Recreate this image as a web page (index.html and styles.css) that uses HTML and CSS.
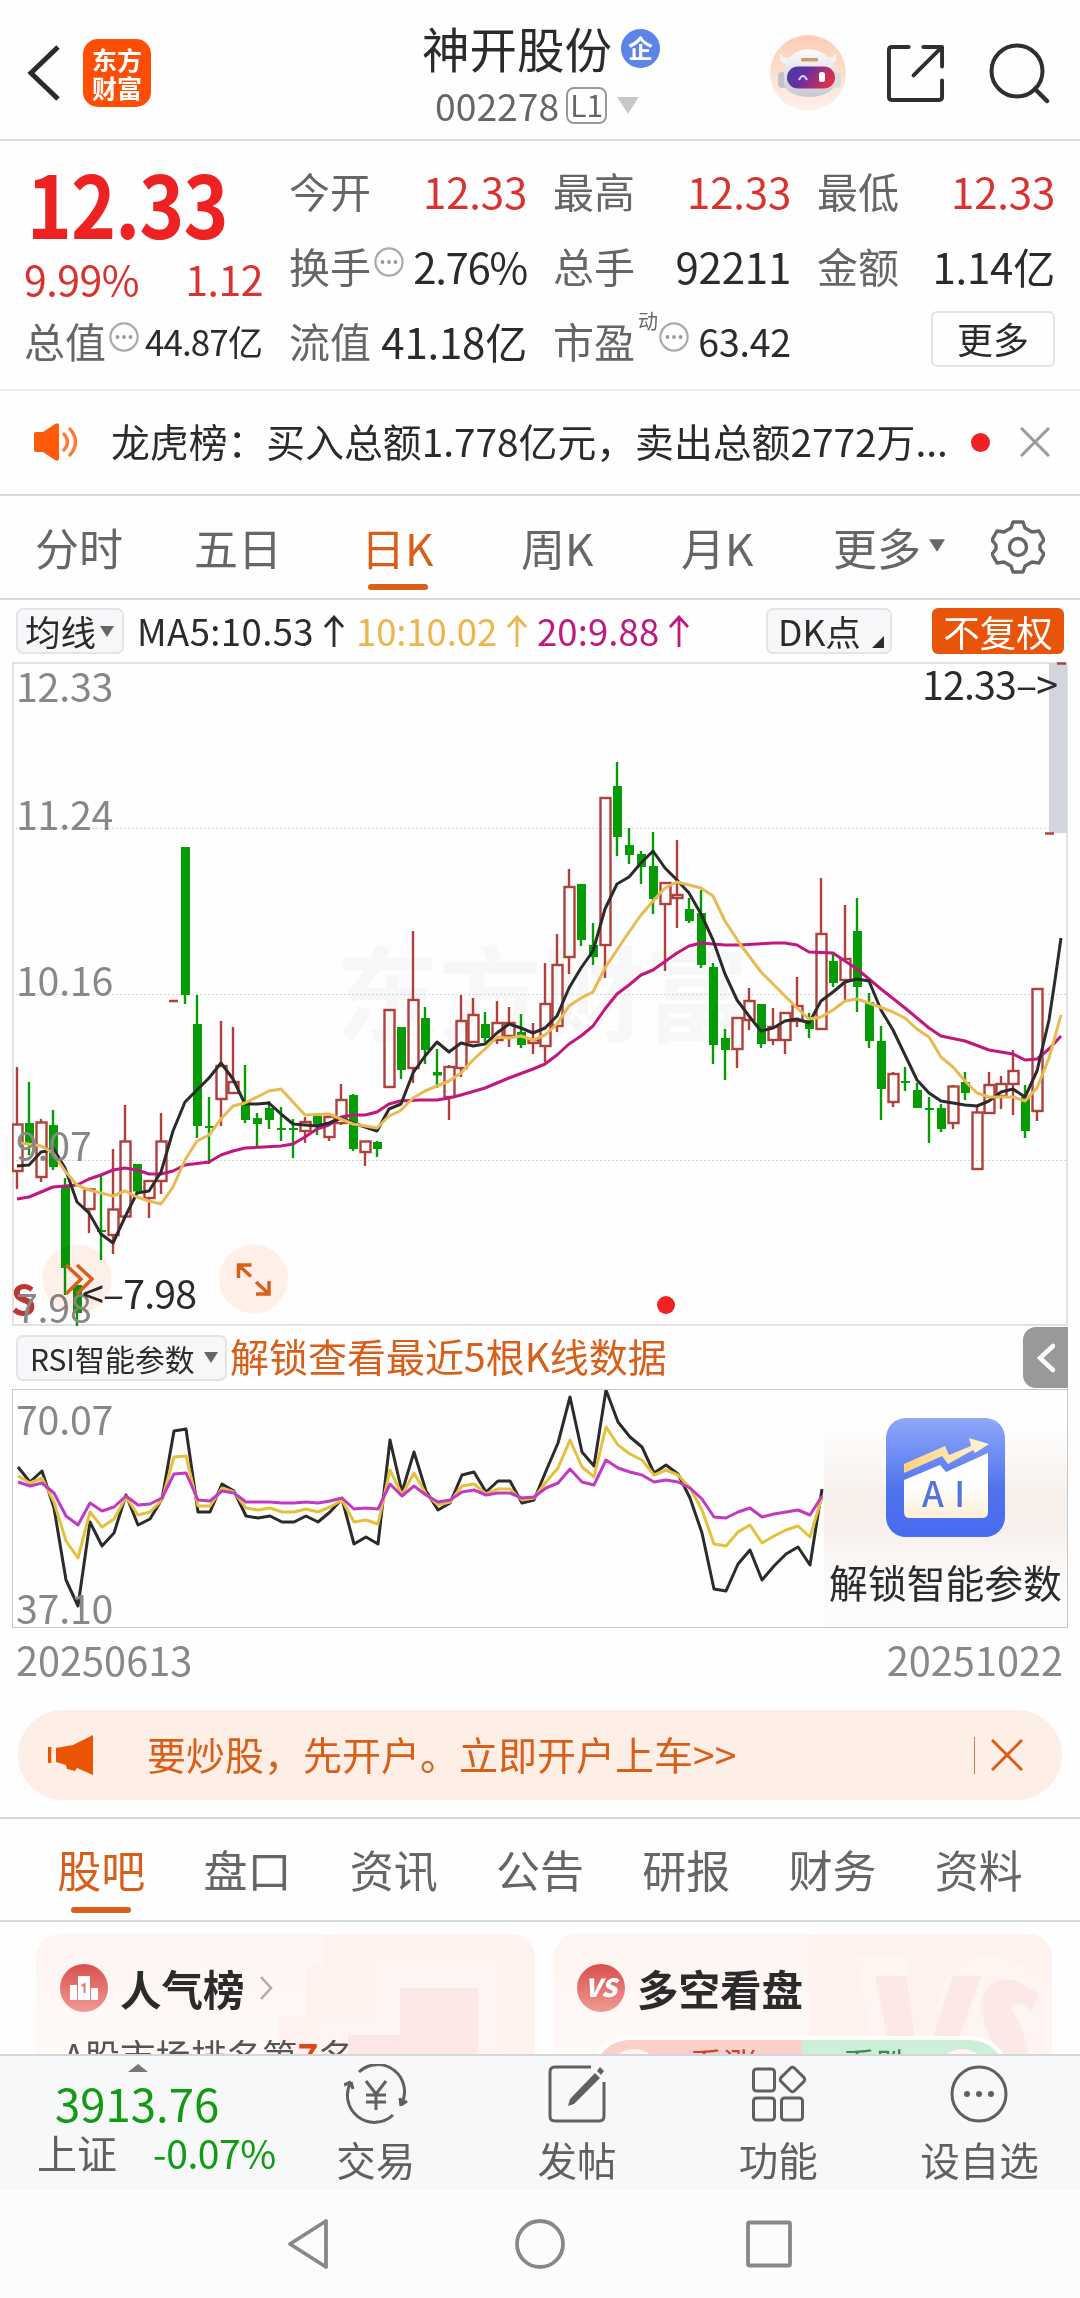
FILE: index.html
```html
<!DOCTYPE html>
<html lang="zh-CN">
<head>
<meta charset="utf-8">
<title>神开股份 002278</title>
<link rel="stylesheet" href="styles.css">
</head>
<body>
<svg class="defs" width="0" height="0">
  <symbol id="more-info" viewBox="0 0 30 30"><circle cx="15" cy="15" r="13.6" fill="none" stroke="#aaa" stroke-width="2.2"/><circle cx="8.5" cy="15" r="1.9" fill="#999"/><circle cx="15" cy="15" r="1.9" fill="#999"/><circle cx="21.5" cy="15" r="1.9" fill="#999"/></symbol>
  <symbol id="arrow-up" viewBox="0 0 22 32"><path d="M11 32V3M2 12l9-10 9 10" fill="none" stroke="currentColor" stroke-width="2.8"/></symbol>
  <symbol id="caret" viewBox="0 0 14 11"><path d="M0 0h14l-7 11z" fill="currentColor"/></symbol>
</svg>

<header class="header">
  <svg class="back" viewBox="0 0 34 58"><path d="M31 3L4 29l27 26" fill="none" stroke="#2b2b2b" stroke-width="5"/></svg>
  <div class="logo"><span>东方</span><span>财富</span></div>
  <div class="title">
    <div class="name">神开股份<span class="badge">企</span></div>
    <div class="code">002278<span class="level">L1</span><svg class="code-caret"><use href="#caret"/></svg></div>
  </div>
  <svg class="robot" viewBox="0 0 76 76">
    <defs>
      <linearGradient id="rb" x2="0" y2="1"><stop stop-color="#fbcdb4"/><stop offset="1" stop-color="#fff1ea"/></linearGradient>
      <linearGradient id="rf" x2="1" y2="0.3"><stop stop-color="#3f3fa8"/><stop offset=".45" stop-color="#6a2fa0"/><stop offset="1" stop-color="#d8304f"/></linearGradient>
      <linearGradient id="rw" x2="0" y2="1"><stop stop-color="#fdfbfb"/><stop offset="1" stop-color="#c6c8d2"/></linearGradient>
    </defs>
    <circle cx="38" cy="38" r="38" fill="url(#rb)"/>
    <path d="M19 29q-11 0-9-11 4 6 12 4zM59 29q9 0 7-11-4 6-11 4z" fill="#f6f1f0"/>
    <rect x="8" y="37" width="9" height="16" rx="4" fill="#c2c3cc"/><rect x="62" y="37" width="9" height="16" rx="4" fill="#dcdce2"/>
    <path d="M14 46V38C16 7 60 6 65 38v10c-2 18-49 19-51 0z" fill="url(#rw)"/>
    <rect x="31" y="23" width="17" height="3.500" rx="1" fill="#d39a6a"/>
    <rect x="17" y="31.500" width="48" height="22" rx="11" fill="url(#rf)"/>
    <path d="M29 45q4-8 8 0" fill="none" stroke="#d9d4ff" stroke-width="2"/><rect x="49" y="37" width="6" height="10" rx="2.500" fill="#fff"/>
  </svg>
  <svg class="share" viewBox="0 0 60 60"><path d="M23 3H6Q3 3 3 6v48q0 3 3 3h48q3 0 3-3V37M38 3h19v20M55 5L28 32" fill="none" stroke="#2f2f2f" stroke-width="4" stroke-linecap="round" stroke-linejoin="round"/></svg>
  <svg class="search" viewBox="0 0 62 62"><circle cx="29" cy="29" r="25.500" fill="none" stroke="#2f2f2f" stroke-width="4"/><path d="M47 47l12 12" stroke="#2f2f2f" stroke-width="4.5" stroke-linecap="round"/></svg>
</header>

<section class="quote">
  <div class="main-quote">
    <div class="price">12.33</div>
    <div class="change"><span>9.99%</span><span>1.12</span></div>
    <div class="cell"><span class="k">总值<svg><use href="#more-info"/></svg></span><span class="v small">44.87亿</span></div>
  </div>
  <div class="cells">
    <div class="cell"><span class="k">今开</span><span class="v up">12.33</span></div>
    <div class="cell"><span class="k">最高</span><span class="v up">12.33</span></div>
    <div class="cell"><span class="k">最低</span><span class="v up">12.33</span></div>
    <div class="cell"><span class="k">换手<svg><use href="#more-info"/></svg></span><span class="v turnover">2.76%</span></div>
    <div class="cell"><span class="k">总手</span><span class="v">92211</span></div>
    <div class="cell"><span class="k">金额</span><span class="v">1.14亿</span></div>
    <div class="cell"><span class="k">流值</span><span class="v">41.18亿</span></div>
    <div class="cell"><span class="k">市盈<sup>动</sup><svg><use href="#more-info"/></svg></span><span class="v mid">63.42</span></div>
    <div class="cell end"><button class="more">更多</button></div>
  </div>
</section>

<section class="news">
  <svg class="speaker" viewBox="0 0 46 38"><path d="M2 9h7L21 1q3-2 4 1v34q-1 3-4 1L9 29H2q-2 0-2-2V11q0-2 2-2z" fill="#ff5a0a"/><path d="M30 11q7 8 0 16M36 6q11 13 0 26" fill="none" stroke="#ff7a3a" stroke-width="3.4" stroke-linecap="round"/></svg>
  <p>龙虎榜：买入总额1.778亿元，卖出总额2772万...</p>
  <i class="dot"></i>
  <svg class="close" viewBox="0 0 30 30"><path d="M1 1l28 28M29 1L1 29" stroke="#999" stroke-width="3"/></svg>
</section>

<nav class="periods">
  <span class="p1">分时</span><span class="p2">五日</span><span class="p3 on">日K</span><span class="p4">周K</span><span class="p5">月K</span><span class="p6">更多<svg><use href="#caret"/></svg></span>
  <svg class="gear" viewBox="-27 -27 54 54"><path d="M-5-25H5l2 6 7 4 7-1 5 9-4 5v4l4 5-5 9-7-1-7 4-2 6H-5l-2-6-7-4-7 1-5-9 4-5v-4l-4-5 5-9 7 1 7-4z" fill="none" stroke="#666" stroke-width="3.4" stroke-linejoin="round"/><circle r="8.5" fill="none" stroke="#666" stroke-width="3.4"/></svg>
</nav>

<div class="ma-row">
  <button class="chip ma">均线<svg><use href="#caret"/></svg></button>
  <span class="m m5">MA5:10.53<svg><use href="#arrow-up"/></svg></span>
  <span class="m m10">10:10.02<svg><use href="#arrow-up"/></svg></span>
  <span class="m m20">20:9.88<svg><use href="#arrow-up"/></svg></span>
  <button class="chip dk">DK点<i></i></button>
  <button class="adjust">不复权</button>
</div>

<svg class="kline" viewBox="12 662 1056 664">
  <text class="watermark" x="335" y="1034" textLength="414">东方财富</text>
  <path d="M12 828.5h1056M12 994.5h1056M12 1160.5h1056" stroke="#d6d6d6" stroke-dasharray="2 2"/>
  <rect x="13" y="663" width="1054" height="662" fill="none" stroke="#e2e2e2" stroke-width="2"/>
  <rect x="1049" y="663" width="18" height="170" fill="#d2d6dc"/>
  <g id="candles"></g>
  <g id="averages" fill="none" stroke-width="3" stroke-linejoin="round"></g>
  <text class="signal" x="11" y="1315">S</text>
  <g class="axis"><text x="16" y="702">12.33</text><text x="16" y="830">11.24</text><text x="16" y="996">10.16</text><text x="16" y="1161">9.07</text><text x="16" y="1323">7.98</text></g>
  <g class="mark"><text x="922" y="700" textLength="136">12.33–&gt;</text><text x="82" y="1309" textLength="115">&lt;–7.98</text></g>
  <g class="tint"><circle cx="77" cy="1279" r="34.5"/><circle cx="253.500" cy="1279" r="34.5"/></g>
  <g fill="none" stroke="#d9601a" stroke-width="3.5"><path d="M66 1265l15 14-15 15M77 1265l15 14-15 15"/><path d="M238.500 1278v-13h13M239 1265.500l12 11M269 1281v13h-13M268 1293l-12-11"/></g>
  <circle cx="666" cy="1305" r="9" fill="#ee2222"/>
</svg>

<div class="rsi-row">
  <button class="chip rsi">RSI智能参数<svg><use href="#caret"/></svg></button>
  <span class="unlock">解锁查看最近5根K线数据</span>
  <button class="fold"><svg viewBox="0 0 18 30"><path d="M16 3L3 15l13 12" fill="none" stroke="#fff" stroke-width="4.5" stroke-linecap="round"/></svg></button>
</div>

<div class="rsi-box">
  <svg class="rsi-chart" viewBox="13 1390 811 237">
    <g id="rsi" fill="none" stroke-width="3" stroke-linejoin="round"></g>
    <g class="axis"><text x="16" y="1435">70.07</text><text x="16" y="1624">37.10</text></g>
  </svg>
  <div class="ai-panel">
    <svg viewBox="0 0 119 123">
      <defs><linearGradient id="aib" x2="0" y2="1"><stop stop-color="#8fa8fb"/><stop offset=".6" stop-color="#4f73ec"/><stop offset="1" stop-color="#4a6af0"/></linearGradient>
      <linearGradient id="aiw" x2="0" y2="1"><stop offset=".5" stop-color="#fff"/><stop offset="1" stop-color="#fdeed8"/></linearGradient>
      <linearGradient id="aig" x2="1" y2="0"><stop stop-color="#ffd27c"/><stop offset="1" stop-color="#fff3d9"/></linearGradient></defs>
      <rect width="119" height="119" rx="20" fill="url(#aib)"/>
      <path d="M18 62l36-15 6 7 42-19v59q0 6-6 6H24q-6 0-6-6z" fill="url(#aiw)"/>
      <path d="M18 46l41-18 4 9 22-9-2-8 20 6-14 9-2-3-25 14-6-8-38 17z" fill="url(#aig)"/>
      <text class="ai-text" x="36" y="89" textLength="43">AI</text>
    </svg>
    <span>解锁智能参数</span>
  </div>
</div>
<div class="dates"><span>20250613</span><span>20251022</span></div>

<div class="banner">
  <svg class="horn" viewBox="0 0 46 40"><path d="M1.500 12v16" stroke="#ea5504" stroke-width="3.5"/><path d="M8 13L25 10 45 0v40l-16-7-2 3-8-2-1-4-10-3z" fill="#ea5504"/></svg>
  <span>要炒股，先开户。立即开户上车&gt;&gt;</span>
  <i></i>
  <svg class="bclose" viewBox="0 0 32 32"><path d="M1 1l30 30M31 1L1 31" stroke="#dd5d18" stroke-width="3"/></svg>
</div>

<nav class="sections"><span class="on">股吧</span><span>盘口</span><span>资讯</span><span>公告</span><span>研报</span><span>财务</span><span>资料</span></nav>

<section class="cards">
  <article class="card">
    <svg class="deco" viewBox="0 0 499 121"><path d="M289 0h210v121H243V82h27V32h19z" fill="#fef1ee"/><path d="M340 25h122v96H282V84h58z" fill="#fef5f2"/><path d="M364 54h78v67h-130v-20h52z" fill="#fce7e4"/></svg>
    <h3><svg viewBox="0 0 48 48"><defs><linearGradient id="ci" x2="0" y2="1"><stop stop-color="#d94f4c"/><stop offset="1" stop-color="#ef9b94"/></linearGradient></defs><circle cx="24" cy="24" r="24" fill="url(#ci)"/><path d="M10 21h7v15h-7zM18 12h12v24H18zM31 24h7v12h-7z" fill="#fff"/><path d="M21.500 22l3-2v9" fill="none" stroke="#e07872" stroke-width="2"/></svg>人气榜<svg class="chev" viewBox="0 0 14 24"><path d="M2 1l10 11L2 23" fill="none" stroke="#aaa" stroke-width="2.5"/></svg></h3>
    <p>A股市场排名第<b>7</b>名</p>
  </article>
  <article class="card">
    <svg class="deco" viewBox="0 0 499 121"><path d="M256 0h243v121H256z" fill="#fef1ee"/><path d="M302 22h50l14 99h-44zM390 50q20-40 75-22l34 22v71H372z" fill="#fef5f2"/><path d="M322 42h32l10 79h-26zM400 42h28l-28 79h-26zM486 60q-48-34-58 10 2 24 18 51h30q-6-30-18-46 8-14 20 4z" fill="#fce9e6"/></svg>
    <h3><svg viewBox="0 0 48 48"><circle cx="24" cy="24" r="24" fill="url(#ci)"/><text class="vs" x="8" y="33" textLength="32">VS</text></svg>多空看盘</h3>
    <div class="vote"><span class="rise"><i></i>看涨</span><span class="fall">看跌<i></i></span></div>
  </article>
</section>

<footer class="bottom">
  <div class="index"><svg class="up-caret" viewBox="0 0 20 8"><path d="M0 8L10 0l10 8z" fill="#777"/></svg><strong>3913.76</strong><div><span>上证</span><em>-0.07%</em></div></div>
  <div class="act"><svg viewBox="0 0 64 60"><g fill="none" stroke="#5f6062" stroke-width="3"><path d="M15 8A27 27 0 0 1 57 41M49 51A27 27 0 0 1 7 18M57 41l6-4M57 42l-1-8M7 18l-7 3M7 18l2 7"/><path d="M22 17l10 13 10-13M32 30v16M22 31h20M22 38h20"/></g></svg><span>交易</span></div>
  <div class="act"><svg viewBox="0 0 64 60"><g fill="none" stroke="#5f6062" stroke-width="3"><path d="M46 3H10Q5 3 5 8v44q0 5 5 5h44q5 0 5-5V18"/></g><path d="M50 9l5 5-26 26-6 2 2-7zM52 7l3-4 4 4-3 4z" fill="#5f6062"/></svg><span>发帖</span></div>
  <div class="act"><svg viewBox="0 0 64 60"><g fill="none" stroke="#5f6062" stroke-width="3"><rect x="7.500" y="5" width="21" height="22" rx="3"/><rect x="7.500" y="34" width="21" height="22" rx="3"/><rect x="35.500" y="34" width="21" height="22" rx="3"/><rect x="37" y="6" width="19" height="19" rx="3" transform="rotate(45 46.500 15.500)"/></g></svg><span>功能</span></div>
  <div class="act"><svg viewBox="0 0 64 60"><circle cx="32" cy="30" r="27" fill="none" stroke="#5f6062" stroke-width="3"/><g fill="#5f6062"><circle cx="20" cy="30" r="3"/><circle cx="32" cy="30" r="3"/><circle cx="44" cy="30" r="3"/></g></svg><span>设自选</span></div>
</footer>
<div class="sysnav">
  <svg viewBox="0 0 44 54"><path d="M40 4v46L4 27z"/></svg>
  <svg viewBox="0 0 54 54"><circle cx="27" cy="27" r="23"/></svg>
  <svg viewBox="0 0 46 54"><rect x="2" y="5.500" width="42" height="43" rx="1.500"/></svg>
</div>
<script src="chart.js"></script>
</body>
</html>
```
FILE: styles.css
```css
* { box-sizing: border-box; }
body { margin: 0; width: 1080px; height: 2298px; overflow: hidden; background: #fefefe; color: #2b2b2b; font-family: "Noto Sans CJK SC", sans-serif; }
button { font: inherit; color: inherit; margin: 0; padding: 0; border: 0; background: none; }
h3, p { margin: 0; }
svg { display: block; flex: none; }
.defs { position: absolute; }

.header { display: flex; align-items: center; height: 141px; padding-top: 7px; border-bottom: 2px solid #dcdcdc; }
.back { width: 34px; height: 58px; margin-left: 27px; }
.logo { display: flex; flex-direction: column; align-items: center; justify-content: center; width: 68px; height: 68px; margin-left: 22px; border-radius: 15px; background: #ff4d05; color: #fff; font-size: 25px; font-weight: 700; line-height: 28px; }
.title { width: 250px; margin-left: 271px; height: 136px; padding-top: 10px; }
.name { display: flex; align-items: center; height: 66px; font-size: 47.500px; line-height: 66px; white-space: nowrap; }
.badge { width: 39px; height: 39px; margin: 0 0 0 9px; border-radius: 50%; background: #5b84e6; color: #fff; font-size: 25px; font-weight: 700; line-height: 36px; text-align: center; }
.code { display: flex; align-items: center; height: 48px; padding-left: 13px; color: #666; font-size: 37.300px; line-height: 48px; }
.level { width: 41px; height: 37px; margin-left: 7px; border: 2px solid #999; border-radius: 8px; font-size: 30px; line-height: 31px; text-align: center; }
.code-caret { width: 22px; height: 17px; margin-left: 10px; color: #c8c8c8; }
.robot { width: 76px; height: 76px; margin-left: 98px; }
.share { width: 59px; height: 59px; margin-left: 40px; }
.search { width: 62px; height: 62px; margin-left: 43px; }

.quote { display: flex; gap: 26px; height: 250px; padding: 12px 24px 0 25px; border-bottom: 2px solid #ececec; }
.main-quote { width: 238px; margin-left: -1px; margin-right: 1px; }
.price { width: 234px; height: 102px; color: #ee2222; font-size: 86px; font-weight: 700; line-height: 97px; letter-spacing: -1px; transform: scaleX(.89); transform-origin: 0 0; padding-left: 3px; }
.change { display: flex; justify-content: space-between; height: 50px; color: #d93330; font-size: 41px; line-height: 46px; }
.change span { letter-spacing: -.5px; }
.change span:last-child { margin-right: -1px; }
.main-quote .cell { margin-top: -2px; }
.cells { display: grid; grid-template-columns: repeat(3, 238px); grid-auto-rows: 75px; column-gap: 26px; }
.cell { display: flex; align-items: center; justify-content: space-between; height: 75px; white-space: nowrap; font-size: 42px; line-height: 75px; }
.k { display: flex; align-items: center; color: #666; font-size: 41px; }
.k svg { width: 30px; height: 30px; margin: -7px 0 0 3px; }
.k sup { align-self: flex-start; margin: 3px 0 0 3px; font-size: 20px; line-height: 30px; }
.k sup + svg { margin-left: 1px; }
.v { letter-spacing: -.2px; }
.turnover { letter-spacing: -1.300px; }
.mid { font-size: 37.500px; }
.small { font-size: 35px; letter-spacing: -.9px; }
.up { color: #d93330; }
.end { justify-content: flex-end; }
.more { width: 124px; height: 56px; margin-top: -4px; border: 2px solid #e2e4e6; border-radius: 6px; font-size: 36px; line-height: 47px; }

.news { display: flex; align-items: center; height: 105px; border-bottom: 2px solid #d8d8d8; }
.speaker { width: 46px; height: 38px; margin-left: 34px; margin-top: -2px; }
.news p { width: 846px; margin-left: 31px; font-size: 38.850px; line-height: 60px; white-space: nowrap; margin-top: -5px; }
.dot { width: 19px; height: 19px; margin-left: 14px; border-radius: 50%; background: #ee2222; }
.close { width: 30px; height: 30px; margin: -2px 0 0 30px; }

.periods { display: flex; align-items: center; height: 104px; padding-left: 35px; border-bottom: 2px solid #d8d8d8; color: #666; font-size: 44px; line-height: 100px; white-space: nowrap; }
.periods span { display: flex; align-items: center; justify-content: flex-start; height: 102px; position: relative; }
.p1 { width: 159px; } .p2 { width: 167px; } .p3 { width: 160px; } .p4 { width: 160px; } .p5 { width: 152px; } .p6 { width: 158px; }
.p6 svg { width: 16px; height: 13px; margin: -4px 0 0 8px; }
.on { color: #d95f18 !important; }
.p3::after { content: ""; position: absolute; left: 7px; bottom: 8px; width: 60px; height: 6px; border-radius: 3px; background: #d95f18; }
.gear { width: 54px; height: 54px; }

.ma-row { display: flex; align-items: center; height: 62px; padding-left: 16px; font-size: 36.500px; line-height: 60px; white-space: nowrap; }
.chip { display: flex; align-items: center; height: 46px; border: 2px solid #e2e4e7; border-radius: 7px; background: #f6f7f9; line-height: 40px; }
.ma { width: 108px; padding-left: 7px; font-size: 35.500px; }
.chip svg { width: 14px; height: 11px; margin-left: 4px; color: #666; }
.m { display: flex; align-items: center; height: 60px; }
.m svg { width: 22px; height: 32px; margin-left: 9px; }
.m5 { width: 219px; margin-left: 13px; letter-spacing: .4px; }
.m10 { width: 181px; color: #edb54c; letter-spacing: -.1px; }
.m20 { width: 229px; color: #c0187e; letter-spacing: .1px; }
.dk { width: 126px; padding-left: 10px; font-size: 35.500px; }
.dk i { align-self: flex-end; margin: 0 0 4px 11px; border: 6px solid; border-color: transparent #2b2b2b #2b2b2b transparent; }
.adjust { width: 132px; height: 46px; margin-left: 40px; border-radius: 6px; background: #e8550a; color: #fff; font-size: 36.500px; line-height: 41px; }

.kline { width: 1056px; height: 664px; margin-left: 12px; }
.axis { fill: #888; font-size: 39.300px; letter-spacing: -.2px; }
.mark { fill: #2b2b2b; font-size: 39.300px; }
.signal { fill: #bb3733; font-size: 40px; font-weight: 700; }
.watermark { fill: #f7f7f7; font-size: 104px; font-weight: 700; }
.tint { fill: #fff0ea; mix-blend-mode: multiply; }

.rsi-row { display: flex; align-items: center; height: 63px; padding: 0 12px 0 16px; }
.rsi { width: 211px; padding-left: 12px; font-size: 29.900px; white-space: nowrap; line-height: 38px; }
.rsi svg { margin-left: 9px; }
.unlock { width: 793px; margin: -5px 0 0 3px; color: #d95f18; font-size: 39px; line-height: 60px; white-space: nowrap; }
.fold { display: flex; align-items: center; justify-content: center; width: 45px; height: 61px; border-radius: 13px 0 0 13px; background: #999; }
.fold svg { width: 18px; height: 30px; }

.rsi-box { display: flex; width: 1056px; height: 239px; margin-left: 12px; border: 1px solid #c8c8c8; }
.rsi-chart { width: 811px; height: 237px; }
.ai-panel { display: flex; flex-direction: column; align-items: center; width: 243px; padding-top: 28px; background: linear-gradient(#fefefe 15%, #f6efea 48%, #f7f0ec 58%, #fbfaf9 78%, #fcfcfc); font-size: 38.800px; line-height: 60px; white-space: nowrap; }
.ai-panel svg { width: 119px; height: 123px; margin-bottom: 10px; }
.ai-text { fill: #5374df; font-size: 35px; font-weight: 500; }
.dates { display: flex; justify-content: space-between; height: 82px; padding: 0 17px 0 16px; color: #888; font-size: 39.700px; line-height: 61px; }

.banner { display: flex; align-items: center; width: 1044px; height: 90px; margin-left: 18px; padding-left: 30px; border-radius: 45px; background: #fdeee6; color: #d95f18; font-size: 39px; line-height: 80px; white-space: nowrap; }
.horn { width: 46px; height: 40px; }
.banner span { width: 820px; margin: -5px 0 0 53px; }
.banner i { width: 1px; height: 37px; margin-left: 7px; background: #d07a50; }
.bclose { width: 32px; height: 32px; margin-left: 16px; }

.sections { display: flex; height: 105px; margin-top: 17px; padding: 0 28px; border-top: 2px solid #d8d8d8; border-bottom: 2px solid #d8d8d8; color: #666; font-size: 44px; line-height: 101px; }
.sections span { flex: 1; position: relative; text-align: center; }
.sections .on::after { content: ""; position: absolute; left: 43px; bottom: 7px; width: 60px; height: 6px; border-radius: 3px; background: #d95f18; }

.cards { display: flex; gap: 18px; height: 132px; padding: 12px 28px 0 36px; overflow: hidden; }
.card { position: relative; width: 499px; height: 200px; padding: 30px 24px 0; border-radius: 24px; background: linear-gradient(#fef4f1, #fef9f7 50%); overflow: hidden; }
.deco { position: absolute; left: 0; top: 0; width: 499px; height: 121px; }
.card h3 { position: relative; display: flex; align-items: center; height: 48px; font-size: 41.500px; font-weight: 700; line-height: 44px; }
.card h3 svg { width: 48px; height: 48px; margin-right: 12px; }
.card h3 .chev { width: 14px; height: 24px; margin: 0 0 0 14px; }
.card p { position: relative; margin: 13px 0 0 3px; color: #555; font-size: 35.500px; line-height: 60px; white-space: nowrap; }
.card b { color: #dd4518; }
.vs { fill: #fff; font-size: 25px; font-weight: 900; font-style: italic; }
.vote { position: relative; display: flex; width: 420px; height: 80px; margin: 24px 0 0 13px; border: 4px solid #fff; border-radius: 40px; background: #cdeed8; overflow: hidden; font-size: 34px; line-height: 48px; }
.vote span { display: flex; align-items: flex-start; }
.vote i { width: 52px; height: 52px; margin-top: 9px; border-radius: 50%; background: #fff4f2; }
.rise { width: 208px; padding-left: 14px; gap: 29px; background: #fbd0cb; color: #c8442c; }
.fall { flex: 1; padding-left: 40px; gap: 26px; color: #398a50; }

.bottom { display: flex; height: 136px; border-top: 2px solid #d4d6d8; background: #f7f8fa; }
.index { width: 275px; flex: none; padding: 8px 0 0 37px; }
.up-caret { width: 20px; height: 8px; margin-left: 91px; }
.index strong { display: block; height: 59px; margin: 1px 0 0 18px; color: #129a12; font-size: 45.500px; font-weight: 400; line-height: 59px; }
.index div { display: flex; gap: 36px; color: #5f6062; font-size: 40px; line-height: 40px; white-space: nowrap; }
.index em { color: #129a12; font-size: 39px; font-style: normal; letter-spacing: -.4px; }
.act { display: flex; flex-direction: column; align-items: center; width: 201.250px; padding-top: 8px; color: #5f6062; font-size: 39.500px; }
.act svg { width: 64px; height: 60px; }
.act span { height: 50px; margin-top: 10px; line-height: 50px; }
.sysnav { display: flex; align-items: center; height: 108px; padding-left: 286px; background: #fcfcfc; }
.sysnav svg { height: 54px; fill: none; stroke: #888; stroke-width: 3.8; stroke-linejoin: round; }
.sysnav svg:nth-child(1) { width: 44px; }
.sysnav svg:nth-child(2) { width: 54px; margin-left: 183px; }
.sysnav svg:nth-child(3) { width: 46px; margin-left: 179px; }
```
FILE: chart.js
```js
// Daily candles: [direction, high, body top, body bottom, low] in chart units, 12 apart from x = 17.
const candles = [
  ['r',1067,1124.5,1171,1189],['g',1082,1123,1143,1155],['r',1119,1122.5,1177,1182],['g',1110,1125,1167,1170],['g',1178,1186,1268,1295],['g',1285,1285,1313,1326],['r',1189,1189.5,1209,1233],['g',1174,1230,1232,1260],
  ['r',1149,1209.5,1235,1254],['r',1105,1141.5,1216.5,1217],['g',1164,1164,1191.5,1193],['r',1181,1181,1198,1218],['r',1113,1141.5,1181,1194],['r',1000,1001,1001,1002],['g',847,847,995,1004],['g',995,1024,1126,1138],
  ['g',1097,1126,1128,1164],['r',1021,1066,1099,1126],['r',1027,1082,1093,1094],['g',1065,1102,1120,1123],['g',1113,1118,1124,1146],['g',1101,1108,1120,1129],['g',1107,1128,1130,1141],['g',1119,1128,1130,1158],
  ['r',1117,1122,1131,1143],['g',1115,1116,1126,1135],['r',1115,1117,1137,1141],['r',1084,1100,1123,1125],['g',1094,1095,1149,1151],['r',1141,1141.5,1152,1166],['g',1141,1142,1149,1157],['r',1010,1010,1087,1088],
  ['g',1027,1027,1070,1079],['r',931,1000,1068,1083],['g',1007,1018,1050,1064],['g',1049,1072,1075.5,1088],['r',1065,1067,1097,1120],['r',995,1021,1068,1077],['r',998,1015,1042,1043],['g',1012,1024,1038,1042],
  ['r',1001,1023,1040,1044],['r',1007,1023,1036,1047],['g',1014,1032,1045,1048],['r',1023,1040,1043,1054],['r',963,1004,1046,1062],['r',934,965,1026,1032],['r',869,887,957,974],['g',884,884,940,946],
  ['g',923,945,957,965],['r',798,798,945,978],['g',762,786,837,856],['g',828,845,855,864],['g',851,854,867,884],['g',832,866,899,914],['r',882,883,904,971],['r',840,895,898,928],
  ['g',898,909,921,923],['g',890,913,965,968],['g',963,967,1045,1064],['g',1029,1038,1050,1080],['r',1018,1018,1049,1068],['r',988,1001,1020,1030],['g',1004,1004,1044,1048],['r',1008,1027,1040,1045],
  ['r',1013,1013,1040,1054],['r',977,1006,1021,1027],['g',1013,1020,1029,1038],['r',878,934,1029,1030],['g',952,961,983,987],['r',905,959,980,1000],['g',898,931,987,1012],['g',993,1002,1041,1048],
  ['g',1026,1041,1089,1120],['r',1072,1074,1102,1107],['g',1067,1081,1083,1091],['g',1083,1090,1108,1108],['g',1097,1108,1110,1143],['g',1104,1108,1129,1132],['r',1085,1086.5,1123,1129],['g',1072,1082,1093,1100],
  ['r',1107,1112.5,1169,1170],['r',1072,1085,1113,1114],['r',1076,1084,1096,1109],['r',1050,1071,1084,1115],['g',1085,1097,1131,1138],['r',989,989,1111,1121],['r',832,833.5,833.5,834],['r',663,663.5,663.5,664]
];
const RED = '#b0403c', GREEN = '#069c06';
document.getElementById('candles').innerHTML = candles.map(([dir, high, top, bottom, low], i) => {
  const x = 17 + i * 12;
  if (dir === 'g') {
    return `<path d="M${x} ${high}V${low}" stroke="${GREEN}" stroke-width="2.4"/><rect x="${x - 4}" y="${top}" width="9" height="${bottom - top}" fill="${GREEN}"/>`;
  }
  if (top === bottom) return `<path d="M${x - 4} ${top}h9" stroke="${RED}" stroke-width="2.5"/>`;
  return `<path d="M${x} ${high}V${top}M${x} ${bottom}V${low}" stroke="${RED}" stroke-width="2.4"/><rect x="${x - 4.5}" y="${top}" width="10" height="${bottom - top}" fill="none" stroke="${RED}" stroke-width="2.4"/>`;
}).join('');

const averages = {
  '#c0187e': '17,1199 29,1197 53,1187 77,1185 89,1179 101,1175 113,1170 125,1168 137,1170 149,1174 161,1174 173,1171 185,1165 209,1162 221,1155 233,1151 245,1148 281,1146 293,1144 305,1137 317,1129 329,1125 341,1117 353,1115 365,1115 377,1112 389,1104 400,1101 420,1100 437,1100 449,1098 461,1095 485,1088 509,1078 533,1069 545,1064 557,1055 569,1044 581,1036 593,1026 605,1009 617,994 629,985 641,975 653,970 677,953 689,946 701,943 725,945 740,945 757,944 773,943 785,943 797,945 809,952 833,953 857,969 881,989 905,1008 917,1018 929,1028 941,1036 965,1041 989,1050 1013,1054 1025,1060 1037,1059 1049,1049 1061,1036',
  '#2b2b2b': '17,1166 29,1165 41,1152 47,1151 53,1148 65,1168 77,1202 89,1213 101,1234 113,1243 125,1217 137,1193 149,1191 161,1172 173,1131 185,1102 197,1090 209,1078 221,1063 233,1079 245,1104 257,1104 269,1103 281,1114 293,1124 305,1125 317,1126 329,1123 341,1118 353,1123 365,1127 377,1131 389,1109 401,1104 413,1073 425,1056 437,1042 449,1052 461,1043 473,1046 485,1044 497,1033 509,1024 521,1028 533,1033 545,1028 557,1016 569,988 581,968 593,951 605,909 617,884 629,877 641,863 653,851 665,868 677,880 689,893 701,914 713,940 725,974 737,1000 749,1016 761,1031 773,1028 785,1021 797,1019 809,1023 821,1001 833,992 845,982 857,979 869,981 881,1010 893,1030 905,1055 917,1080 929,1093 941,1101 953,1103 965,1105 977,1106 989,1101 1001,1092 1013,1089 1025,1097 1037,1071 1049,1020 1055,980 1061,938',
  '#e9b954': '21,1143 41,1146 53,1153 65,1171 77,1185 89,1190 101,1193 113,1196 125,1191 137,1197 149,1201 161,1204 173,1187 185,1160 197,1141 209,1135 221,1119 233,1106 245,1103 257,1097 269,1091 281,1089 305,1115 329,1114 341,1119 353,1124 377,1128 389,1116 400,1111 413,1098 425,1091 437,1086 449,1081 461,1073 473,1060 485,1049 497,1037 509,1038 521,1036 533,1040 545,1035 557,1024 569,1006 581,998 593,992 605,968 617,950 629,932 641,915 653,901 665,888 677,882 701,888 713,896 725,921 740,944 761,972 785,996 797,1008 809,1019 821,1017 833,1010 845,1001 857,999 869,1003 893,1012 905,1018 917,1029 929,1037 941,1057 953,1067 965,1081 977,1093 989,1097 1013,1097 1025,1101 1037,1088 1049,1058 1061,1015'
};
document.getElementById('averages').innerHTML = Object.entries(averages)
  .map(([color, points]) => `<polyline points="${points}" stroke="${color}"/>`).join('');

const rsi = {
  '#2b2b2b': [1467,1482,1471,1508,1580,1606,1522,1546,1533,1495,1525,1519,1499,1431,1429,1512,1512,1484,1491,1516,1518,1516,1522,1522,1516,1522,1512,1499,1544,1537,1544,1440,1492,1452,1491,1510,1503,1475,1472,1492,1481,1481,1503,1500,1471,1443,1397,1452,1466,1390,1422,1437,1447,1473,1465,1474,1498,1533,1589,1591,1564,1550,1580,1566,1554,1547,1565,1489],
  '#e4c13c': [1476,1483,1478,1502,1541,1558,1512,1527,1519,1497,1515,1512,1500,1457,1456,1506,1506,1488,1492,1508,1510,1508,1512,1512,1509,1512,1507,1500,1522,1520,1524,1470,1495,1473,1494,1505,1502,1486,1484,1494,1489,1489,1500,1498,1482,1468,1440,1467,1477,1427,1445,1454,1460,1475,1470,1475,1488,1510,1544,1546,1532,1525,1543,1536,1530,1526,1537,1497],
  '#c23ac2': [1482,1486,1483,1493,1516,1525,1503,1511,1507,1496,1505,1504,1498,1474,1473,1500,1501,1491,1493,1502,1502,1502,1503,1503,1502,1503,1501,1498,1509,1508,1509,1484,1496,1486,1495,1502,1500,1492,1490,1495,1493,1493,1498,1497,1488,1483,1469,1482,1485,1460,1468,1472,1475,1482,1480,1482,1488,1499,1517,1518,1512,1508,1517,1514,1512,1510,1515,1496]
};
document.getElementById('rsi').innerHTML = Object.entries(rsi)
  .map(([color, ys]) => `<polyline stroke="${color}" points="${ys.map((y, i) => `${18 + i * 12},${y}`).join(' ')}"/>`).join('');
```
